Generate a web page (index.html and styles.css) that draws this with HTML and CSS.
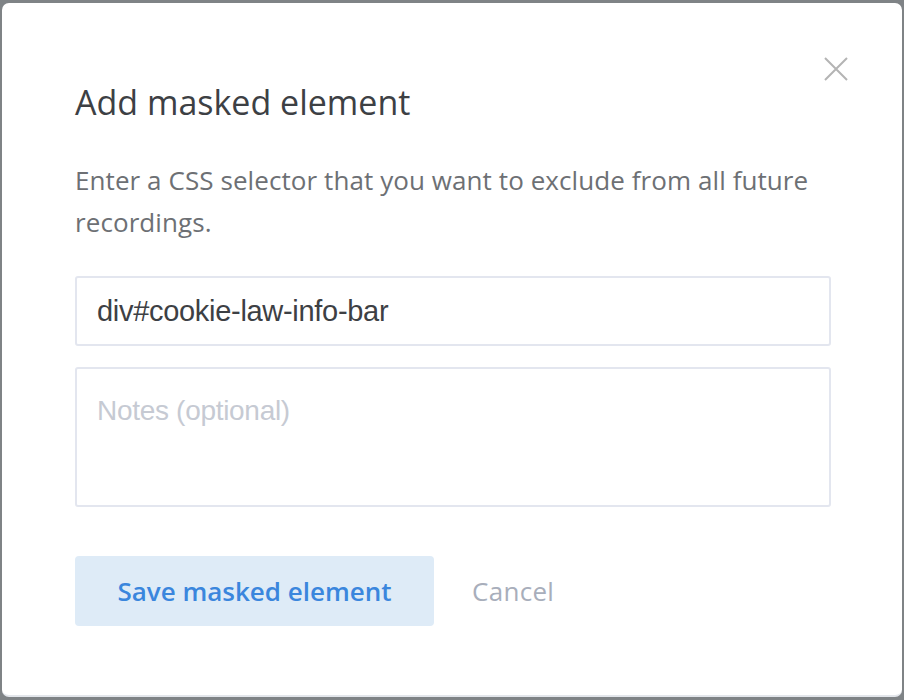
FILE: index.html
```html
<!DOCTYPE html>
<html>
<head>
<meta charset="utf-8">
<link rel="stylesheet" href="styles.css">
</head>
<body>
<div class="modal">
  <button class="close" aria-label="Close">
    <svg width="24" height="24" viewBox="0 0 24 24"><path d="M1 1 L23 23 M23 1 L1 23" stroke="#b4b4b4" stroke-width="2" fill="none"/></svg>
  </button>
  <h1 class="title">Add masked element</h1>
  <p class="desc">Enter a CSS selector that you want to exclude from all future recordings.</p>
  <div class="field">div#cookie-law-info-bar</div>
  <div class="field notes">Notes (optional)</div>
  <div class="actions">
    <button class="save">Save masked element</button>
    <button class="cancel">Cancel</button>
  </div>
</div>
</body>
</html>
```
FILE: styles.css
```css
html, body { margin: 0; padding: 0; }
body {
  background: #7f8386;
  width: 904px;
  height: 700px;
  padding: 3px 2px;
  box-sizing: border-box;
  font-family: "Open Sans", sans-serif;
}
.modal {
  position: relative;
  background: #fff;
  border-radius: 7px;
  border-bottom: 2px solid #e3e6eb;
  height: 694px;
  box-sizing: border-box;
  padding: 79px 71px 0 73px;
}
.close {
  position: absolute;
  top: 54px;
  right: 54px;
  background: none;
  border: 0;
  padding: 0;
  width: 24px;
  height: 24px;
}
.close svg { display: block; }
.title {
  margin: 0;
  font-size: 34px;
  font-weight: 400;
  color: #3d4044;
  line-height: 40px;
}
.desc {
  margin: 37px 0 0;
  font-size: 26px;
  letter-spacing: 0.08px;
  line-height: 42px;
  color: #6d7074;
}
.field {
  margin-top: 33px;
  height: 70px;
  box-sizing: border-box;
  border: 2px solid #e3e6ef;
  border-radius: 3px;
  padding: 0 20px;
  display: flex;
  align-items: center;
  font-family: "Liberation Sans", Arial, sans-serif;
  font-size: 29px;
  letter-spacing: -0.3px;
  color: #3d4044;
}
.notes {
  margin-top: 21px;
  height: 140px;
  align-items: flex-start;
  padding-top: 26px;
  font-size: 28px;
  color: #c6cad3;
}
.actions {
  margin-top: 49px;
  display: flex;
  align-items: center;
  gap: 38px;
}
.save {
  width: 359px;
  height: 70px;
  border: 0;
  border-radius: 4px;
  background: #deebf7;
  color: #3a86dd;
  font-family: "Open Sans", sans-serif;
  font-weight: 600;
  font-size: 26px;
  padding: 0;
}
.cancel {
  background: none;
  border: 0;
  padding: 0;
  font-family: "Open Sans", sans-serif;
  font-size: 26px;
  letter-spacing: 0.3px;
  color: #a8aebb;
}
```
